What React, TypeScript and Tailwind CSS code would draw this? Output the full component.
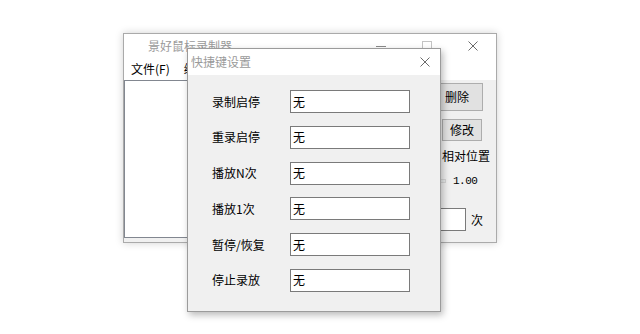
import React from 'react';

const CloseGlyph = () => (
  <svg width="10" height="10" viewBox="0 0 10 10" className="block">
    <path d="M0.5 0.5 L9.5 9.5 M9.5 0.5 L0.5 9.5" stroke="#6b6b6b" strokeWidth="1" fill="none" />
  </svg>
);

const MinGlyph = () => (
  <svg width="10" height="10" viewBox="0 0 10 10" className="block">
    <path d="M0 5.5 H10" stroke="#8a8a8a" strokeWidth="1" fill="none" />
  </svg>
);

const MaxGlyph = () => (
  <svg width="10" height="10" viewBox="0 0 10 10" className="block">
    <rect x="0.5" y="0.5" width="9" height="9" stroke="#c4c4c4" strokeWidth="1" fill="none" />
  </svg>
);

const hotkeys = ['录制启停', '重录启停', '播放N次', '播放1次', '暂停/恢复', '停止录放'];

const MainWindow = () => (
  <div className="absolute left-[123px] top-[33px] w-[374px] h-[210px] border border-[#aaaaaa] bg-[#f0f0f0] shadow-[0_0_8px_rgba(0,0,0,0.18)] flex flex-col">
    {/* title bar */}
    <div className="h-[24px] bg-white flex items-center shrink-0">
      <span className="pl-[24px] text-[12px] text-[#9a9a9a] leading-none">景好鼠标录制器</span>
      <div className="ml-auto flex h-full">
        <div className="w-[46px] h-full flex items-center justify-center"><MinGlyph /></div>
        <div className="w-[46px] h-full flex items-center justify-center"><MaxGlyph /></div>
        <div className="w-[46px] h-full flex items-center justify-center"><CloseGlyph /></div>
      </div>
    </div>
    {/* menu bar */}
    <div className="h-[22px] bg-white flex items-center shrink-0 text-[12px] text-black leading-none">
      <span className="px-[7px]">文件(F)</span>
      <span className="px-[7px]">编辑(E)</span>
    </div>
    {/* client */}
    <div className="flex-1 flex">
      <div className="w-[296px] h-[158px] bg-white border border-[#828790] shrink-0" />
      <div className="flex-1 flex flex-col text-[12px] text-black">
        <div className="mt-[3px] ml-[11px] w-[52px] h-[28px] border border-[#adadad] bg-[#e1e1e1] flex items-center justify-center leading-none">删除</div>
        <div className="mt-[8px] ml-[22px] w-[40px] h-[22px] border border-[#adadad] bg-[#e1e1e1] flex items-center justify-center leading-none">修改</div>
        <div className="mt-[7px] h-[16px] pl-[22px] flex items-center whitespace-nowrap leading-none">相对位置</div>
        <div className="mt-[11px] h-[12px] flex items-center">
          <div className="w-[26px] h-[4px] bg-[#e7eaea] border border-[#d6d6d6]" />
          <span className="ml-[7px] font-['Liberation_Mono',monospace] text-[11px] tracking-[-0.5px] leading-none">1.00</span>
        </div>
        <div className="mt-[21px] flex items-center">
          <div className="w-[46px] h-[23px] border border-[#7a7a7a] bg-white" />
          <span className="ml-[5px] leading-none">次</span>
        </div>
      </div>
    </div>
  </div>
);

const HotkeyDialog = () => (
  <div className="absolute left-[187px] top-[48px] w-[254px] h-[264px] border border-[#9b9b9b] bg-[#f0f0f0] shadow-[2px_3px_7px_rgba(0,0,0,0.28)] flex flex-col">
    <div className="h-[26px] bg-white flex items-center shrink-0">
      <span className="pl-[3px] text-[12px] text-[#9a9a9a] leading-none">快捷键设置</span>
      <div className="ml-auto w-[30px] h-full flex items-center justify-center"><CloseGlyph /></div>
    </div>
    <div className="flex flex-col pt-[15px] pl-[24px] gap-[12.8px]">
      {hotkeys.map((k) => (
        <div key={k} className="flex items-center">
          <span className="w-[78px] text-[12px] text-black leading-none whitespace-nowrap">{k}</span>
          <div className="w-[120px] h-[23px] border border-[#7a7a7a] bg-white pl-[2px] flex items-center text-[12px] text-black leading-none">无</div>
        </div>
      ))}
    </div>
  </div>
);

export default function App() {
  return (
    <div className="relative w-[640px] h-[334px] bg-white overflow-hidden font-['Noto_Sans_CJK_SC',sans-serif]">
      <MainWindow />
      <HotkeyDialog />
    </div>
  );
}
